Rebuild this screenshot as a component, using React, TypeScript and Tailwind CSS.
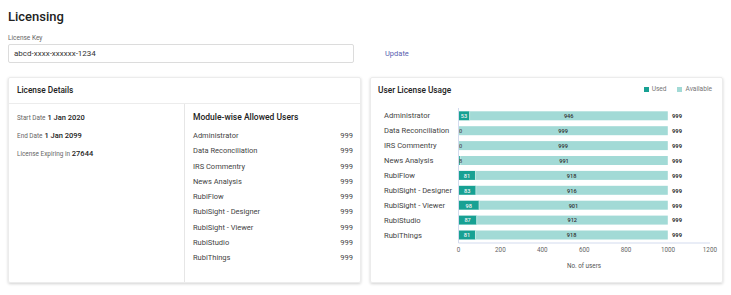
import React from 'react';

const modules = [
    { name: 'Administrator', used: 53, allowed: 999 },
    { name: 'Data Reconciliation', used: 0, allowed: 999 },
    { name: 'IRS Commentry', used: 0, allowed: 999 },
    { name: 'News Analysis', used: 8, allowed: 999 },
    { name: 'RubiFlow', used: 81, allowed: 999 },
    { name: 'RubiSight - Designer', used: 83, allowed: 999 },
    { name: 'RubiSight - Viewer', used: 98, allowed: 999 },
    { name: 'RubiStudio', used: 87, allowed: 999 },
    { name: 'RubiThings', used: 81, allowed: 999 },
];

const X0 = 87.5;
const K = 0.2095;
const USED = '#17a193';
const AVAIL = '#a2dad6';

const UsageChart: React.FC = () => {
    const ticks = [0, 200, 400, 600, 800, 1000, 1200];
    return (
        <svg width={351} height={180} className="block" fontFamily="Roboto, sans-serif">
            {modules.map((m, i) => {
                const cy = 13.8 + 14.9 * i;
                const uw = m.used * K;
                const aw = (m.allowed - m.used) * K;
                return (
                    <g key={m.name}>
                        <text x={13} y={cy} fontSize={7.6} fill="#444" dominantBaseline="central">
                            {m.name}
                        </text>
                        <rect x={X0} y={cy - 4.5} width={uw} height={9} fill={USED} />
                        <rect x={X0 + uw} y={cy - 4.5} width={aw} height={9} fill={AVAIL} />
                        {m.used > 0 && <line x1={X0 + uw} x2={X0 + uw} y1={cy - 4.5} y2={cy + 4.5} stroke="#cfeeea" strokeWidth={0.7} />}
                        <text
                            x={m.used > 20 ? X0 + uw / 2 : X0 + 2}
                            y={cy + 0.3}
                            fontSize={5.6}
                            fontWeight={500}
                            fill={m.used > 20 ? '#f2f2f2' : '#555'}
                            textAnchor="middle"
                            dominantBaseline="central"
                        >
                            {m.used}
                        </text>
                        <text x={X0 + uw + aw / 2} y={cy + 0.3} fontSize={5.6} fontWeight={500} fill="#333" textAnchor="middle" dominantBaseline="central">
                            {m.allowed - m.used}
                        </text>
                        <text x={301} y={cy + 0.3} fontSize={5.8} fontWeight={700} fill="#333" dominantBaseline="central">
                            {m.allowed}
                        </text>
                    </g>
                );
            })}
            <line x1={X0} x2={X0} y1={6} y2={141} stroke="#d3dbee" strokeWidth={1} />
            <line x1={X0} x2={339} y1={141} y2={141} stroke="#d3dbee" strokeWidth={1} />
            {ticks.map((t) => (
                <text key={t} x={X0 + t * K} y={148} fontSize={6.3} fill="#666" textAnchor="middle" dominantBaseline="central">
                    {t}
                </text>
            ))}
            <text x={213} y={163.5} fontSize={6.3} fill="#555" textAnchor="middle" dominantBaseline="central">
                No. of users
            </text>
        </svg>
    );
};

export default function App() {
    return (
        <div className="w-[731px] h-[295px] bg-white font-['Roboto',sans-serif] text-[#333]">
            <div className="px-2 pt-[7px]">
                <h1 className="text-[13px] font-medium leading-[20px] text-[#222]">Licensing</h1>
                <div className="mt-[6px] text-[6.5px] leading-[10px] text-[#666]">License Key</div>
                <div className="mt-px flex items-center">
                    <div className="w-[346px] h-[19px] border border-[#dcdcdc] rounded-[2px] flex items-center px-[5px] text-[8px] text-[#333]">
                        abcd-xxxx-xxxxxx-1234
                    </div>
                    <span className="ml-[31px] text-[7.5px] text-[#5a5fb0]">Update</span>
                </div>

                <div className="mt-[14px] flex gap-[9px]">
                    {/* License Details */}
                    <div className="w-[353px] h-[206px] border border-[#ececec] rounded-[2px] shadow-[0_1px_3px_rgba(0,0,0,0.18)] flex flex-col">
                        <div className="h-[26px] flex items-center px-2 border-b border-[#ececec] text-[8.3px] font-medium text-[#222]">
                            License Details
                        </div>
                        <div className="flex flex-1">
                            <div className="w-[176px] border-r border-[#e6e6e6] pl-2 pt-[5px] flex flex-col">
                                <div className="leading-[18px] text-[7.5px] font-medium text-[#222]">
                                    <span className="text-[6.4px] font-normal text-[#666]">Start Date</span> 1 Jan 2020
                                </div>
                                <div className="leading-[18px] text-[7.5px] font-medium text-[#222]">
                                    <span className="text-[6.4px] font-normal text-[#666]">End Date</span> 1 Jan 2099
                                </div>
                                <div className="leading-[18px] text-[7.5px] font-medium text-[#222]">
                                    <span className="text-[6.4px] font-normal text-[#666]">License Expiring in</span> 27644
                                </div>
                            </div>
                            <div className="flex-1 pl-2 pr-[7px] pt-[6px]">
                                <div className="text-[8.5px] font-medium leading-[14px] text-[#222]">Module-wise Allowed Users</div>
                                <div className="mt-[4px]">
                                    {modules.map((m) => (
                                        <div key={m.name} className="flex justify-between leading-[15.3px] text-[7.5px] text-[#444]">
                                            <span>{m.name}</span>
                                            <span>{m.allowed}</span>
                                        </div>
                                    ))}
                                </div>
                            </div>
                        </div>
                    </div>

                    {/* User License Usage */}
                    <div className="w-[353px] h-[206px] border border-[#ececec] rounded-[2px] shadow-[0_1px_3px_rgba(0,0,0,0.18)] flex flex-col">
                        <div className="h-[24px] flex items-center justify-between pl-[7px] pr-[10px]">
                            <span className="text-[8.3px] font-medium text-[#222]">User License Usage</span>
                            <div className="flex items-center text-[6.6px] text-[#777]">
                                <span className="w-[5px] h-[5px] bg-[#17a193] mr-[3px]" />
                                <span>Used</span>
                                <span className="w-[5px] h-[5px] bg-[#a2dad6] ml-[10px] mr-[4px]" />
                                <span>Available</span>
                            </div>
                        </div>
                        <UsageChart />
                    </div>
                </div>
            </div>
        </div>
    );
}
